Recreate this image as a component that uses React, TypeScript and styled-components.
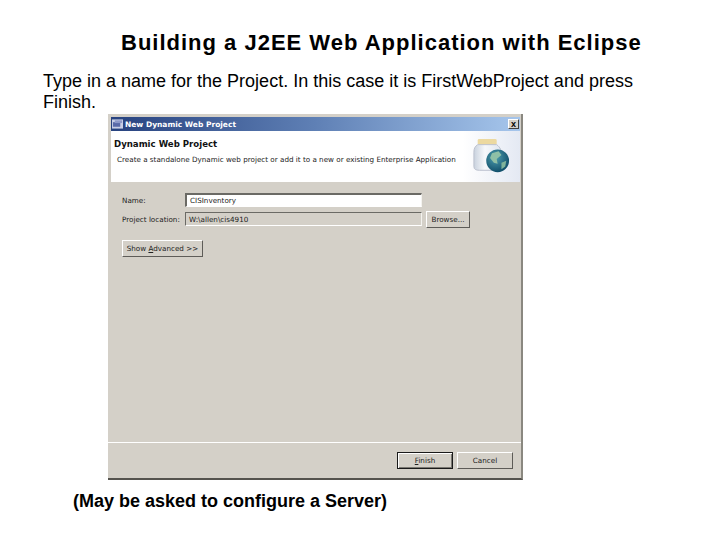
import React from "react";
import styled, { createGlobalStyle } from "styled-components";

const GlobalStyle = createGlobalStyle`
  html, body {
    margin: 0;
    padding: 0;
    background: #ffffff;
  }
`;

export default function App() {
  return (
    <>
      <GlobalStyle />
      <S.Slide>
        <S.Title>Building a J2EE Web Application with Eclipse</S.Title>
        <S.Intro>
          Type in a name for the Project. In this case it is FirstWebProject and press Finish.
        </S.Intro>
        <S.Dialog>
          <S.TitleBar>
            <S.WindowIcon viewBox="0 0 12 10">
              <rect width="12" height="10" fill="#c9cfe6" />
              <rect x="1" y="3" width="8" height="5" fill="#5a6aa8" />
              <rect x="3" y="1" width="8" height="3" fill="#8d98c8" />
            </S.WindowIcon>
            <S.TitleText>New Dynamic Web Project</S.TitleText>
            <S.CloseButton>x</S.CloseButton>
          </S.TitleBar>
          <S.Banner>
            <S.BannerText>
              <S.BannerTitle>Dynamic Web Project</S.BannerTitle>
              <S.BannerDesc>
                Create a standalone Dynamic web project or add it to a new or existing Enterprise Application
              </S.BannerDesc>
            </S.BannerText>
            <S.JarIcon viewBox="0 0 40 40">
              <defs>
                <radialGradient id="globe" cx="0.4" cy="0.35" r="0.7">
                  <stop offset="0" stopColor="#4f9fb0" />
                  <stop offset="1" stopColor="#0d4a66" />
                </radialGradient>
                <linearGradient id="jar" x1="0" y1="0" x2="1" y2="0">
                  <stop offset="0" stopColor="#c9d2de" />
                  <stop offset="0.4" stopColor="#f6f8fb" />
                  <stop offset="1" stopColor="#dfe5ee" />
                </linearGradient>
              </defs>
              <rect x="6" y="1" width="20" height="6" rx="1.5" fill="#ecd9a0" />
              <path d="M6 7 H26 C30 10 31 13 31 18 V30 C31 33 29 34 26 34 H8 C4 34 2 33 2 30 V15 C2 11 3 9 6 7 Z" fill="url(#jar)" stroke="#b9bfcc" />
              <circle cx="27" cy="24" r="12" fill="url(#globe)" />
              <path d="M21 16 L28 14 L31 18 L26 22 L27 27 L23 26 L19 21 Z" fill="#8fc0a6" />
              <path d="M31 26 L36 24 L35 30 L31 33 Z" fill="#7fb39a" />
            </S.JarIcon>
          </S.Banner>
          <S.Body>
            <S.FormGrid>
              <S.FieldLabel>Name:</S.FieldLabel>
              <S.TextField>CISInventory</S.TextField>
              <span />
              <S.FieldLabel>Project location:</S.FieldLabel>
              <S.TextField $disabled>W:\allen\cis4910</S.TextField>
              <S.DialogButton $width={44}>Browse...</S.DialogButton>
            </S.FormGrid>
            <S.DialogButton $width={81}>
              <span>
                Show <u>A</u>dvanced &gt;&gt;
              </span>
            </S.DialogButton>
          </S.Body>
          <S.Footer>
            <S.DialogButton $width={56} $primary>
              <span>
                <u>F</u>inish
              </span>
            </S.DialogButton>
            <S.DialogButton $width={56}>Cancel</S.DialogButton>
          </S.Footer>
        </S.Dialog>
        <S.Caption>(May be asked to configure a Server)</S.Caption>
      </S.Slide>
    </>
  );
}

const S = {
  Slide: styled.div`
    width: 720px;
    height: 540px;
    overflow: hidden;
    box-sizing: border-box;
    padding-top: 30px;
    font-family: "Liberation Sans", Arial, sans-serif;
    color: #000000;
  `,
  Title: styled.h1`
    margin: 0 0 0 121px;
    font-size: 22px;
    line-height: 26px;
    font-weight: 700;
    letter-spacing: 1px;
    white-space: nowrap;
  `,
  Intro: styled.p`
    margin: 15px 0 0 43px;
    width: 600px;
    font-size: 18px;
    line-height: 21px;
  `,
  Dialog: styled.div`
    display: flex;
    flex-direction: column;
    width: 415px;
    height: 366px;
    margin: 1px 0 0 108px;
    box-sizing: border-box;
    background: #d4d0c8;
    border-right: 2px solid #8a8880;
    border-bottom: 2px solid #55534e;
    font-family: Tahoma, "DejaVu Sans", sans-serif;
    font-size: 7.2px;
    color: #222222;
  `,
  TitleBar: styled.div`
    display: flex;
    align-items: center;
    flex: none;
    height: 14px;
    margin: 3px 1px 0 3px;
    padding: 0 1px 0 1px;
    background: linear-gradient(90deg, #27427f 0%, #5f80b5 50%, #a6c6ec 100%);
  `,
  WindowIcon: styled.svg`
    width: 11px;
    height: 10px;
    margin-right: 2px;
  `,
  TitleText: styled.span`
    flex: 1;
    color: #ffffff;
    font-weight: 700;
    font-size: 7.5px;
    white-space: nowrap;
  `,
  CloseButton: styled.span`
    display: flex;
    align-items: center;
    justify-content: center;
    width: 11px;
    height: 10px;
    box-sizing: border-box;
    background: #d4d0c8;
    border: 1px solid;
    border-color: #ffffff #404040 #404040 #ffffff;
    font-family: "Liberation Sans", sans-serif;
    font-weight: 700;
    font-size: 9px;
    line-height: 1;
    color: #000000;
  `,
  Banner: styled.div`
    display: flex;
    align-items: center;
    justify-content: space-between;
    flex: none;
    height: 51px;
    margin: 0 1px 0 3px;
    padding: 0 10px 0 3px;
    box-sizing: border-box;
    background: linear-gradient(90deg, #ffffff 0%, #ffffff 86%, #e4e9f3 100%);
  `,
  BannerText: styled.div`
    display: flex;
    flex-direction: column;
    align-self: flex-start;
    gap: 5px;
    padding-top: 8px;
  `,
  BannerTitle: styled.div`
    font-weight: 700;
    font-size: 8.6px;
    line-height: 11px;
    color: #111111;
  `,
  BannerDesc: styled.div`
    padding-left: 3px;
    font-size: 7.2px;
    line-height: 9px;
    white-space: nowrap;
  `,
  JarIcon: styled.svg`
    width: 38px;
    height: 38px;
    flex: none;
  `,
  Body: styled.div`
    flex: 1;
    display: flex;
    flex-direction: column;
    align-items: flex-start;
    gap: 14px;
    padding: 11px 0 0 14px;
    border-bottom: 1px solid #ffffff;
  `,
  FormGrid: styled.div`
    display: grid;
    grid-template-columns: 59px 237px 44px;
    grid-template-rows: 14px 14px;
    column-gap: 4px;
    row-gap: 5px;
    align-items: center;
  `,
  FieldLabel: styled.span`
    white-space: nowrap;
  `,
  TextField: styled.div<{ $disabled?: boolean }>`
    display: flex;
    align-items: center;
    height: 14px;
    box-sizing: border-box;
    padding-left: 3px;
    background: ${(p) => (p.$disabled ? "#d4d0c8" : "#ffffff")};
    border: 1px solid;
    border-color: #6b6a65 #f4f3ef #ffffff #6b6a65;
    border-top-width: ${(p) => (p.$disabled ? 1 : 2)}px;
    border-left-width: ${(p) => (p.$disabled ? 1 : 2)}px;
  `,
  DialogButton: styled.div<{ $width: number; $primary?: boolean }>`
    display: flex;
    align-items: center;
    justify-content: center;
    width: ${(p) => p.$width}px;
    height: 17px;
    box-sizing: border-box;
    background: #d4d0c8;
    white-space: nowrap;
    border: 1px solid;
    border-color: ${(p) =>
      p.$primary ? "#1a1a1a" : "#ffffff #5e5c58 #5e5c58 #ffffff"};
    ${(p) => (p.$primary ? "box-shadow: inset 1px 1px 0 #ffffff, inset -1px -1px 0 #7a7872;" : "")}
  `,
  Footer: styled.div`
    flex: none;
    display: flex;
    justify-content: flex-end;
    gap: 4px;
    height: 35px;
    padding: 9px 8px 0 0;
    box-sizing: border-box;
  `,
  Caption: styled.div`
    margin: 11px 0 0 73px;
    font-size: 18px;
    line-height: 20px;
    font-weight: 700;
    white-space: nowrap;
  `,
};
